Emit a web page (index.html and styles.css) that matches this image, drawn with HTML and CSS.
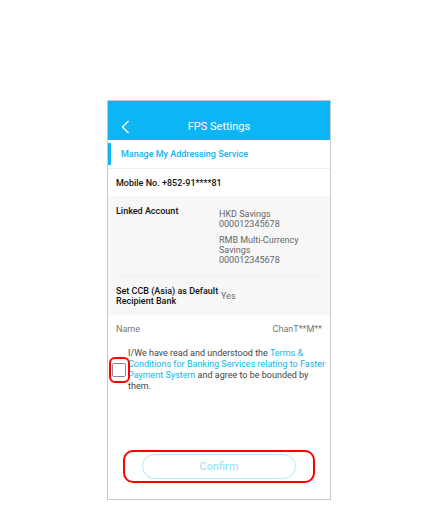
FILE: index.html
```html
<!DOCTYPE html>
<html lang="en">
<head>
    <meta charset="UTF-8">
    <meta name="viewport" content="width=device-width, initial-scale=1.0">
    <title>FPS Settings</title>
    <link rel="stylesheet" href="styles.css">
</head>
<body>
    <div class="phone">
        <header class="header">
            <button class="back-btn" type="button" aria-label="Back">
                <svg width="9" height="14" viewBox="0 0 9 14" fill="none" stroke="#fff" stroke-width="1.4">
                    <path d="M7.5 1 L1.5 7 L7.5 13"/>
                </svg>
            </button>
            <h1 class="title">FPS Settings</h1>
        </header>

        <h2 class="section-title">Manage My Addressing Service</h2>

        <div class="mobile">Mobile No. +852-91****81</div>

        <!-- Account details -->
        <dl class="details">
            <div class="row">
                <dt>Linked Account</dt>
                <dd class="accounts">
                    <p>HKD Savings<br>000012345678</p>
                    <p>RMB Multi-Currency Savings<br>000012345678</p>
                </dd>
            </div>
            <div class="row row-default">
                <dt>Set CCB (Asia) as Default Recipient Bank</dt>
                <dd>Yes</dd>
            </div>
        </dl>

        <div class="name-row">
            <span>Name</span>
            <span>ChanT**M**</span>
        </div>

        <!-- Terms -->
        <div class="terms">
            <span class="check">
                <input type="checkbox" id="agree">
            </span>
            <label for="agree">I/We have read and understood the <a href="#">Terms &amp; Conditions for Banking Services relating to Faster Payment System</a> and agree to be bounded by them.</label>
        </div>

        <div class="confirm">
            <button class="confirm-btn" type="button">Confirm</button>
        </div>
    </div>
</body>
</html>
```
FILE: styles.css
```css
* {
    margin: 0;
    padding: 0;
    box-sizing: border-box;
}

body {
    font-family: Roboto, "Liberation Sans", sans-serif;
    font-size: 9px;
    line-height: 10px;
    background: #fff;
    color: #222;
    padding: 100px 16px 10px;
}

.phone {
    max-width: 224px;
    margin: 0 auto;
    border: 1px solid #c8c8c8;
}

.header {
    display: grid;
    grid-template-columns: 34px 1fr 34px;
    align-items: center;
    background: #0db5f4;
    color: #fff;
    padding: 16px 0 3px;
}

.back-btn {
    display: flex;
    justify-content: center;
    background: none;
    border: none;
    padding: 3px 0;
    cursor: pointer;
}

.title {
    font-size: 11px;
    line-height: 14px;
    font-weight: 400;
    text-align: center;
}

.section-title {
    border-bottom: 1px solid #eee;
    color: #0db5f4;
    font-size: 9px;
    line-height: 22px;
    font-weight: 500;
    padding: 3px 0;
    display: flex;
}

.section-title::before {
    content: "";
    width: 3px;
    background: #0db5f4;
    margin-right: 10px;
}

.mobile {
    color: #111;
    font-weight: 500;
    padding: 9px 8px 8px;
}

/* Account details */
.details {
    background: #f7f7f7;
    padding: 0 8px;
}

.row {
    display: grid;
    grid-template-columns: 103px 1fr;
    padding: 10px 0 11px;
}

.row dt {
    color: #111;
    font-weight: 500;
}

.row dd {
    color: #666;
}

.accounts {
    display: grid;
    gap: 6px;
    padding-top: 3px;
}

.row-default {
    border-top: 1px solid #eee;
    align-items: center;
    padding: 9px 0;
}

.row-default dd {
    padding-left: 2px;
}

.name-row {
    display: flex;
    justify-content: space-between;
    color: #777;
    padding: 9px 8px;
}

/* Terms */
.terms {
    display: flex;
    align-items: center;
    gap: 2px;
    padding: 5px 2px 0 4px;
    line-height: 11px;
    color: #444;
}

.terms a {
    color: #0db5f4;
    text-decoration: none;
}

.check {
    position: relative;
    flex: none;
    display: flex;
}

.check::after {
    content: "";
    position: absolute;
    inset: -6px -4px -6px -3px;
    border: 2px solid #f00;
    border-radius: 6px;
    pointer-events: none;
}

.check input {
    appearance: none;
    width: 14px;
    height: 14px;
    border: 1px solid #888;
    border-radius: 2px;
    background: #fff;
}

.confirm {
    margin: 58px 15px 16px;
    padding: 2px 17px;
    border: 2px solid #f00;
    border-radius: 10px;
}

.confirm-btn {
    display: block;
    width: 100%;
    border: 1px solid #b5e8fc;
    border-radius: 13px;
    background: #fff;
    color: #90dbf9;
    font-family: inherit;
    font-size: 11px;
    line-height: 23px;
}
```
